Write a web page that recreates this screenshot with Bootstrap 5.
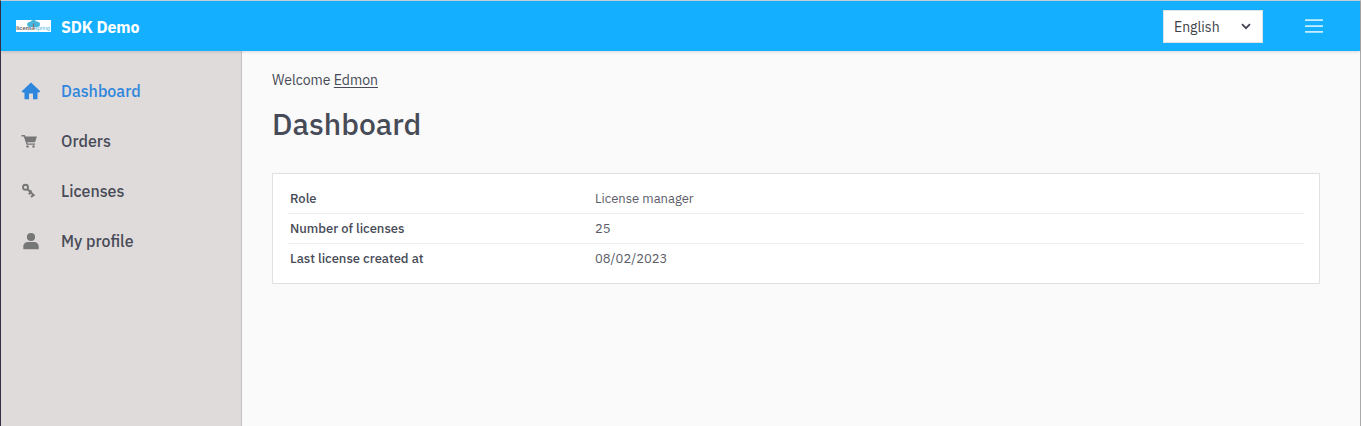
<!DOCTYPE html>
<html lang="en">
<head>
<meta charset="utf-8">
<meta name="viewport" content="width=device-width, initial-scale=1">
<title>SDK Demo</title>
<link href="https://cdn.jsdelivr.net/npm/bootstrap@5.3.0/dist/css/bootstrap.min.css" rel="stylesheet">
<style>
body{font-family:"IBM Plex Sans",Roboto,"Liberation Sans",sans-serif;color:#474b57;background:#fafafa;font-size:14px;line-height:20px;overflow:hidden}
.app-frame{height:426px;border-style:solid;border-width:1px 1px 0;border-color:#c9d3da #aaa #aaa #382f45}
.app-header{height:50px;background:#14b0ff;padding-left:15px;box-shadow:0 1px 3px rgba(0,0,0,.14);z-index:1;position:relative}
.app-logo{width:35px;height:12px;margin-right:10px}
.app-name{font-size:16px;font-weight:700;letter-spacing:-.16px;margin-top:1px}
.lang-box{width:100px;height:33px;border:1px solid #dbe5ea;color:#3d3f47;padding:1px 11px 0 10px;font-size:14px;margin-right:42px}
.menu-btn{margin-right:37px;width:18px;height:14px}
.app-side{width:241px;background:#dfdbda;border-right:1px solid #c3c1c3;padding-top:15px}
.side-item{height:50px;padding-left:19px;font-size:16px;font-weight:500;color:#484b58;text-decoration:none}
.side-item svg{width:20px;height:20px;margin-right:21px;fill:#777}
.side-item.current{color:#2f86dd}
.side-item.current svg{fill:#2f86dd}
.app-main{padding:19px 40px 0 30px}
.welcome-line a{color:#474b57;text-underline-offset:2px}
.page-title{font-size:30px;font-weight:500;line-height:40px;margin:14px 0 29px}
.info-card{height:111px;border:1px solid #e1e1e1;padding:9px 15px}
.info-row{height:30px;font-size:13px;padding-left:2px}
.info-row:first-child{padding-top:1px}
.info-row+.info-row{border-top:1px solid #ededed}
.info-key{width:305px;font-weight:500}
.info-val{color:#5b5d69}
</style>
</head>
<body>
<div class="app-frame d-flex flex-column">
<header class="app-header d-flex align-items-center flex-shrink-0">
<svg class="app-logo" viewBox="0 0 35 12"><path fill="#fff" d="M0 0h35v12H0z"/><path fill="#46b5dd" d="M13 7a2.500 2.500 0 0 1-.5-4.700Q14 1.500 14.500 1.800A3.500 3.500 0 0 1 20.500 1.500Q24 1.500 24 4.200T21.500 7z"/><path stroke="#806f70" stroke-width="1.200" d="M17.500 3.500V7"/><text x=".3" y="10.300" font-family="Liberation Sans" font-size="5.500"><tspan font-weight="700" fill="#655b5d">license</tspan><tspan fill="#46b5dd">spring</tspan></text></svg>
<span class="app-name text-white">SDK Demo</span>
<div class="lang-box bg-white ms-auto d-flex align-items-center justify-content-between"><span>English</span><svg width="10" height="7" viewBox="0 0 10 7" fill="none" stroke="#454452" stroke-width="1.800"><path d="M1 1.200l4 4 4-4"/></svg></div>
<svg class="menu-btn" viewBox="0 0 18 14"><path fill="#c9edff" d="M0 .2h18v1.800H0zM0 6.200h18v1.800H0zM0 12h18v1.800H0z"/></svg>
</header>
<div class="d-flex flex-grow-1">
<nav class="app-side flex-shrink-0">
<a class="side-item current d-flex align-items-center"><svg viewBox="0 0 20 20"><path d="M11 1.500 20.500 10.500 19 11.500H17.500V18.300H13V12.500H9V18.300H4.500V11.500H3L1.500 10.500Z"/></svg><span>Dashboard</span></a>
<a class="side-item d-flex align-items-center"><svg viewBox="0 0 20 20"><path d="M1.500 4h3.200l.8 1.600H17l-2 5.600H7.300l.4 1.200H15v1.400H6.600L3.800 5.400H1.500z"/><circle cx="7.500" cy="15.500" r="1.200"/><circle cx="13.500" cy="15.500" r="1.200"/></svg><span>Orders</span></a>
<a class="side-item d-flex align-items-center"><svg viewBox="0 0 20 20"><circle cx="5.500" cy="6.300" r="2.500" fill="none" stroke="#777" stroke-width="1.900"/><path d="M7.500 8.200l7 6.700M10.800 11.200l-2 2M13.300 13.700l-2.200 2.400M11.500 9.500l-2 2" fill="none" stroke="#777" stroke-width="2"/></svg><span>Licenses</span></a>
<a class="side-item d-flex align-items-center"><svg viewBox="0 0 20 20"><circle cx="11" cy="6" r="4.100"/><path d="M3.300 18.300v-2.500c0-3.400 2.500-4.800 5-4.800h5.400c2.500 0 5 1.400 5 4.800v2.500z"/></svg><span>My profile</span></a>
</nav>
<main class="app-main flex-grow-1">
<div class="welcome-line">Welcome <a href="#">Edmon</a></div>
<h1 class="page-title">Dashboard</h1>
<section class="info-card bg-white">
<div class="info-row d-flex align-items-center"><span class="info-key">Role</span><span class="info-val">License manager</span></div>
<div class="info-row d-flex align-items-center"><span class="info-key">Number of licenses</span><span class="info-val">25</span></div>
<div class="info-row d-flex align-items-center"><span class="info-key">Last license created at</span><span class="info-val">08/02/2023</span></div>
</section>
</main>
</div>
</div>
<script src="https://cdn.jsdelivr.net/npm/bootstrap@5.3.0/dist/js/bootstrap.bundle.min.js"></script>
</body>
</html>
